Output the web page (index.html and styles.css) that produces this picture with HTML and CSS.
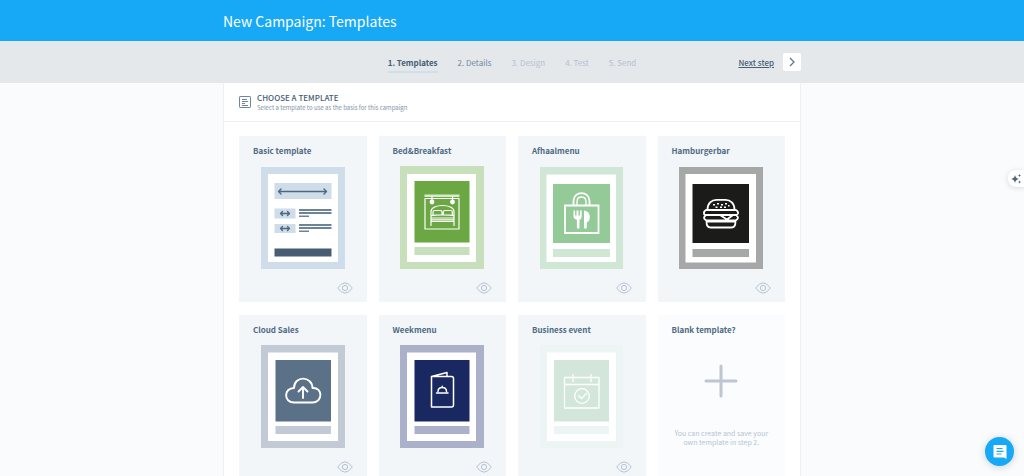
FILE: index.html
```html
<!DOCTYPE html>
<html lang="en">
<head>
<meta charset="utf-8">
<title>New Campaign: Templates</title>
<link rel="stylesheet" href="styles.css">
</head>
<body>
<svg class="defs" aria-hidden="true">
  <symbol id="eye" viewBox="0 0 16 12"><path d="M.7 6Q8-4.4 15.3 6Q8 16.4.7 6Z"/><circle cx="8" cy="6" r="2.6"/></symbol>
</svg>
<header class="topbar"><h1 class="wrap topbar-title">New Campaign: Templates</h1></header>
<nav class="steps" aria-label="Campaign steps">
  <div class="wrap steps-row">
    <ol class="step-list">
      <li><a class="step current" href="#templates">1. Templates</a></li>
      <li><a class="step" href="#details">2. Details</a></li>
      <li><a class="step disabled" href="#design">3. Design</a></li>
      <li><a class="step disabled" href="#test">4. Test</a></li>
      <li><a class="step disabled" href="#send">5. Send</a></li>
    </ol>
    <div class="next">
      <a class="next-link" href="#details">Next step</a>
      <button class="next-button" type="button" aria-label="Next"><svg width="8" height="10" viewBox="0 0 8 10"><path d="M2 1l4 4-4 4"/></svg></button>
    </div>
  </div>
</nav>
<main class="wrap panel">
  <div class="panel-head">
    <svg class="panel-icon" width="12" height="12" viewBox="0 0 12 12"><rect x=".5" y=".5" width="11" height="11" rx=".6"/><path d="M3 3.500h5M3 5.500h6M3 7.500h3M3 9.500h6"/></svg>
    <div>
      <h2 class="panel-title">CHOOSE A TEMPLATE</h2>
      <p class="panel-sub">Select a template to use as the basis for this campaign</p>
    </div>
  </div>
  <div class="grid">
    <article class="card">
      <h3 class="card-title">Basic template</h3>
      <svg class="thumb" viewBox="0 -1 84 103">
        <path fill="#cfdce9" d="M0 0h84v102H0z"/><path fill="#fff" d="M7 7h70v88H7z"/>
        <path fill="#cfdce9" d="M13.500 16h57v16h-57zM13.500 41.500h21v10h-21zM13.500 57h21v9h-21z"/>
        <path fill="#485d73" d="M13.500 81.500h57v8h-57z"/>
        <path class="line" stroke="#516980" stroke-width="1.400" d="M18 24.500h47M20 22L17.500 24.500l2.500 2.500M63 22l2.500 2.500-2.500 2.500M20 46.500h8M21.500 44.500l-2 2 2 2M26.500 44.500l2 2-2 2M20 61.500h8M21.500 59.500l-2 2 2 2M26.500 59.500l2 2-2 2"/>
        <path fill="#6d8496" d="M38 42h32.500v2H38zM38 45h32.500v2H38zM38 48.500h10V50H38zM38 57h32.500v2H38zM38 60h32.500v2H38zM38 63.500h10V65H38z"/>
      </svg>
      <button class="preview" type="button" aria-label="Preview Basic template"><svg><use href="#eye"/></svg></button>
    </article>
    <article class="card">
      <h3 class="card-title">Bed&amp;Breakfast</h3>
      <svg class="thumb" viewBox="0 0 84 103">
        <path fill="#c8dfbb" d="M0 0h84v103H0z"/><path fill="#fff" d="M7 8h69v88H7z"/>
        <path fill="#6ba743" d="M14.500 15h55v61.500h-55z"/><path fill="#c8dfbb" d="M14.500 81h55v8h-55z"/>
        <path fill="#d8eacd" d="M24.500 28.500h35V31h-35z"/>
        <path class="line" stroke="#fff" stroke-width="1.200" d="M25 32.500h34v30.500H25zM32 30.500v4M52.500 30.500v4M31 59.500V45.500c0-8 23-8 23 0v14M31 55.500h23M31.500 52h22M31.500 53.800h22M31 50c3-1.500 20-1.500 23 0M33 48.500V46q0-1.500 1.500-1.500h6q1.500 0 1.500 1.500v2.500M43.300 48.500V46q0-1.500 1.500-1.500h6q1.500 0 1.500 1.500v2.500"/>
        <circle cx="32" cy="36" r="2.400" fill="#fff"/><circle cx="52.500" cy="36" r="2.400" fill="#fff"/>
      </svg>
      <button class="preview" type="button" aria-label="Preview Bed&amp;Breakfast"><svg><use href="#eye"/></svg></button>
    </article>
    <article class="card">
      <h3 class="card-title">Afhaalmenu</h3>
      <svg class="thumb" viewBox="0 -1 84 103">
        <path fill="#d1e7d6" d="M0 0h83v102H0z"/><path fill="#fff" d="M6.500 7.500H76V95H6.500z"/>
        <path fill="#94ca97" d="M13 17h57v59H13z"/><path fill="#d1e7d6" d="M13 82h57v8H13z"/>
        <path class="line miter" stroke="#fff" stroke-width="1.800" d="M25 38.500h33.500v27.500H25zM33.500 38v-4c0-10.500 16-10.500 16 0v4"/>
        <path class="line" stroke="#fff" stroke-width="1.300" d="M37 38v-3.500c0-6 9-6 9 0V38"/>
        <path fill="#fff" d="M33.500 43.500h1.600v5h1.400v-5h2v5h1.400v-5h1.800v6q0 2.500-2.200 3.300V61q-1.300 1.300-2.600 0v-8.200q-3.400-.8-3.400-3.300zM44 43.500q5.800.8 5.800 6.500 0 4-3 5.500V61q-1.400 1.300-2.800 0z"/>
      </svg>
      <button class="preview" type="button" aria-label="Preview Afhaalmenu"><svg><use href="#eye"/></svg></button>
    </article>
    <article class="card">
      <h3 class="card-title">Hamburgerbar</h3>
      <svg class="thumb" viewBox="0 -1 84 103">
        <path fill="#a6a8a8" d="M0 0h84v102H0z"/><path fill="#fff" d="M6.500 7H77v88.500H6.500z"/>
        <path fill="#1b1b19" d="M13.500 17h56.500v59H13.500z"/><path fill="#a6a8a8" d="M13.500 82h56.500v8H13.500z"/>
        <path class="line" stroke="#fff" stroke-width="1.800" d="M28.500 42.500c0-6 4-9.700 9-9.700h9c5 0 9 3.700 9 9.700M27 43h30q2.500 1.500 2 3.500-.5 1.500-2 1.500H27q-2 0-2-1.500-.5-2 2-3.500zM27 48q-4 3 0 5.300h30q4-2.300 0-5.300M41 48l7 4.500 6-4.500M27.500 54.500h29c0 4-1 6-4 6h-21c-3 0-4-2-4-6z"/>
        <path fill="#fff" d="M34 37h2v1.500h-2zM38 36h2v1.500h-2zM42 37h2v1.500h-2zM46 36h2v1.500h-2zM36.500 39.500h2V41h-2zM41 39.500h2V41h-2zM45 39.500h2V41h-2zM49 38h1.500v1.500H49z"/>
      </svg>
      <button class="preview" type="button" aria-label="Preview Hamburgerbar"><svg><use href="#eye"/></svg></button>
    </article>
    <article class="card">
      <h3 class="card-title">Cloud Sales</h3>
      <svg class="thumb" viewBox="0 0 84 103">
        <path fill="#c2cad5" d="M0 0h84v103H0z"/><path fill="#fff" d="M7 7.500h70v88.500H7z"/>
        <path fill="#5b7188" d="M14.500 15H70v61.500H14.500z"/><path fill="#c2cad5" d="M14.500 81H70v8H14.500z"/>
        <path class="line" stroke="#fff" stroke-width="1.900" d="M33 57.500c-10.500 0-10.500-14.500 0-14.500 0-12.500 18-12.500 18.500 0C62 42 62 57.500 51.500 57.500zM42 53V42.500M37.500 46.500l4.500-4.500 4.500 4.500"/>
      </svg>
      <button class="preview" type="button" aria-label="Preview Cloud Sales"><svg><use href="#eye"/></svg></button>
    </article>
    <article class="card">
      <h3 class="card-title">Weekmenu</h3>
      <svg class="thumb" viewBox="0 0 84 103">
        <path fill="#aab1c8" d="M0 0h84v103H0z"/><path fill="#fff" d="M7 7.500h69V96H7z"/>
        <path fill="#1a2862" d="M14.500 15h55v61.500h-55z"/><path fill="#aab1c8" d="M14.500 81h55v8h-55z"/>
        <path class="line" stroke="#fff" stroke-width="1.500" d="M31.500 31.500h20q2 0 2 2V60q0 2-2 2h-20zM31.500 31.500L47 27.500v4M36.500 48h11.500M38 46.500c0-5.500 8.500-5.500 8.500 0M42.200 42v-.7"/>
      </svg>
      <button class="preview" type="button" aria-label="Preview Weekmenu"><svg><use href="#eye"/></svg></button>
    </article>
    <article class="card">
      <h3 class="card-title">Business event</h3>
      <svg class="thumb" viewBox="0 0 84 103">
        <path fill="#edf4f4" d="M0 0h83v103H0z"/><path fill="#fff" d="M7 7.500h69V96H7z"/>
        <path fill="#d2e7da" d="M14 15h55v61.500H14z"/><path fill="#edf4f4" d="M14 81h55v8H14z"/>
        <path class="line" stroke="#fff" stroke-width="1.300" d="M24.500 32.500h34.500v30.500H24.500zM24.500 39.500H59M33 29.500v7M51 29.500v7M38.500 50.500l3 3 5-5"/>
        <circle class="line" stroke="#fff" stroke-width="1.300" cx="42" cy="51" r="7.300"/>
      </svg>
      <button class="preview" type="button" aria-label="Preview Business event"><svg><use href="#eye"/></svg></button>
    </article>
    <article class="card blank">
      <h3 class="card-title">Blank template?</h3>
      <svg class="plus" width="34" height="34" viewBox="0 0 34 34"><path d="M17 2v30M2 17h30"/></svg>
      <p class="blank-text">You can create and save your own template in step 2.</p>
    </article>
  </div>
</main>
<button class="assist" type="button" aria-label="Assistant"><svg width="11" height="10" viewBox="0 0 11 10"><path d="M4 1q.6 3.400 4 4-3.400.6-4 4-.6-3.400-4-4 3.400-.6 4-4zM8.500 0l.5 1 1 .5-1 .5-.5 1-.5-1-1-.5 1-.5zM8.500 6.500l.5 1 1 .5-1 .5-.5 1-.5-1-1-.5 1-.5z"/></svg></button>
<button class="chat" type="button" aria-label="Open chat"><svg width="14" height="16" viewBox="0 0 14 16"><path fill="#fff" d="M1.500 1h11q1 0 1 1v13l-2.500-1.500H1.500q-1 0-1-1V2q0-1 1-1z"/><path stroke="#17a9f5" stroke-width="1.200" d="M3.500 4.500h6M3.500 7.300h7M3.500 10h5"/></svg></button>
</body>
</html>
```
FILE: styles.css
```css
* { box-sizing: border-box; margin: 0; padding: 0; }
body {
  height: 100vh;
  overflow: hidden;
  background: #f9fbfc;
  color: #465d73;
  font-family: "Noto Sans CJK SC", "Noto Sans", sans-serif;
}
button { border: 0; font: inherit; display: flex; align-items: center; justify-content: center; cursor: pointer; }
a { color: inherit; text-decoration: none; }
.defs { display: none; }
.wrap { width: calc(100% - 32px); max-width: 578px; margin: 0 auto; }

.topbar { background: #17a9f5; color: #fff; padding: 10px 0 9px; }
.topbar-title { font-size: 14px; line-height: 22px; font-weight: 400; }

.steps { background: #e4e8eb; }
.steps-row { display: grid; grid-template-columns: 1fr auto 1fr; align-items: center; min-height: 42px; }
.step-list { grid-column: 2; display: flex; gap: 20px; list-style: none; font-size: 8px; line-height: 16px; }
.step { display: block; padding-top: 3px; color: #71869b; border-bottom: 2px solid transparent; }
.step.current { color: #465d73; font-weight: 700; border-color: #cfdfec; }
.step.disabled { color: #b5c1ce; }
.next { display: flex; align-items: center; justify-content: flex-end; gap: 9px; font-size: 8px; }
.next-link { font-weight: 500; text-decoration: underline; }
.next-button { width: 18px; height: 18px; background: #fff; border-radius: 2px; }
.next-button path { fill: none; stroke: #60788a; stroke-width: 1.3; }

.panel { background: #fff; border: solid #edf1f4; border-width: 0 1px; min-height: calc(100vh - 83px); }
.panel-head { display: flex; align-items: center; gap: 6px; padding: 9px 15px; border-bottom: 1px solid #edf1f4; }
.panel-icon { fill: none; stroke: #71869b; }
.panel-title { font-size: 8px; line-height: 11px; font-weight: 500; }
.panel-sub { font-size: 6px; line-height: 9px; color: #8195a9; }

.grid { display: grid; grid-template-columns: repeat(4, 1fr); gap: 13px 12px; padding: 14px 15px; }
.card { display: flex; flex-direction: column; background: #f2f6f9; min-height: 166px; padding: 8px 14px; }
.card-title { font-size: 8px; line-height: 14px; font-weight: 700; color: #4f6a84; }
.thumb { width: 84px; height: 103px; margin-top: 8px; align-self: center; }
.line { fill: none; stroke-linecap: round; stroke-linejoin: round; }
.miter { stroke-linejoin: miter; }
.preview { align-self: flex-end; margin-top: 13px; background: none; }
.preview svg { width: 16px; height: 12px; fill: none; stroke: #b4c2d1; }
.blank { background: #fbfcfd; }
.plus { align-self: center; margin-top: 27px; fill: none; stroke: #bdc6d3; stroke-width: 3; stroke-linecap: round; }
.blank-text { margin-top: 31px; font-size: 7px; line-height: 9px; text-align: center; color: #b4c4d3; }

.assist {
  position: fixed; right: 0; top: 170px; width: 16px; height: 17px;
  background: #fff; border-radius: 8px 0 0 8px; box-shadow: 0 1px 5px #465d7333;
}
.assist path { fill: #50677e; }
.chat {
  position: fixed; right: 10px; bottom: 10px; width: 29px; height: 29px;
  background: #17a9f5; border-radius: 50%; box-shadow: 0 1px 7px #465d7340;
}
.chat svg { fill: none; }
```
